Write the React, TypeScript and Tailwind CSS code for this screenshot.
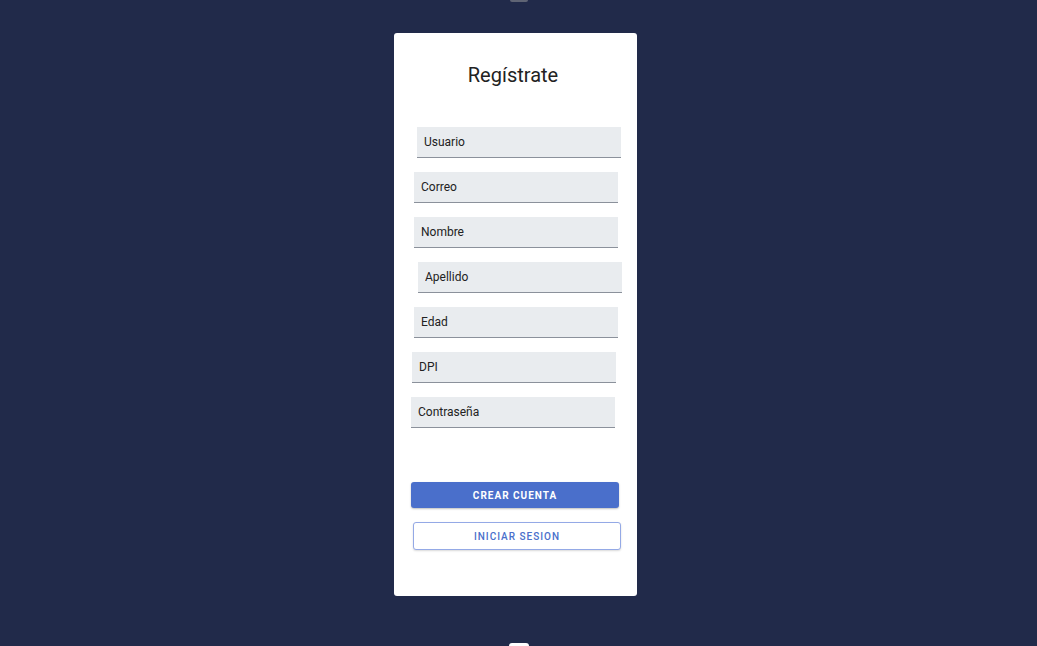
import { useState } from "react";

const fields = [
  { label: "Usuario", shift: "ml-[23px]" },
  { label: "Correo", shift: "ml-[20px]" },
  { label: "Nombre", shift: "ml-[20px]" },
  { label: "Apellido", shift: "ml-[24px]" },
  { label: "Edad", shift: "ml-[20px]" },
  { label: "DPI", shift: "ml-[18px]" },
  { label: "Contraseña", shift: "ml-[17px]" },
];

function Field({ label, shift }: { label: string; shift: string }) {
  const [value, setValue] = useState("");
  return (
    <input
      value={value}
      onChange={(e) => setValue(e.target.value)}
      placeholder={label}
      className={`${shift} h-[31px] w-[204px] border-b border-[#8b919b] bg-[#e9ecef] px-[7px] text-[12px] text-[#222] outline-none placeholder:text-[#222]`}
    />
  );
}

export default function App() {
  return (
    <div
      className="flex h-[646px] flex-col items-center overflow-hidden bg-[#212a4a]"
      style={{ fontFamily: "Roboto, 'Liberation Sans', sans-serif" }}
    >
      <div className="h-[2px] w-[18px] rounded-b-[3px] bg-[#5f6474]" />

      <div className="mr-[6px] mt-[31px] flex h-[563px] w-[243px] flex-col rounded-[3px] bg-white pt-[28px]">
        <h1 className="pr-[5px] text-center text-[20px] leading-[28px] text-[#222]">
          Regístrate
        </h1>

        <div className="mt-[38px] flex flex-col gap-[14px]">
          {fields.map((f) => (
            <Field key={f.label} label={f.label} shift={f.shift} />
          ))}
        </div>

        <button className="ml-[17px] mt-[54px] h-[26px] w-[208px] rounded-[3px] bg-[#4a6fcb] text-[10px] font-bold tracking-[1px] text-white shadow-[0_1px_2px_rgba(0,0,0,0.25)]">
          CREAR CUENTA
        </button>
        <button className="ml-[19px] mt-[14px] h-[28px] w-[208px] rounded-[3px] border border-[#94a9e6] bg-white text-[10px] font-medium tracking-[1px] text-[#4a6fcb] shadow-[0_1px_2px_rgba(0,0,0,0.15)]">
          INICIAR SESION
        </button>
      </div>

      <div className="mt-[47px] h-[3px] w-[20px] rounded-t-[4px] bg-white" />
    </div>
  );
}
